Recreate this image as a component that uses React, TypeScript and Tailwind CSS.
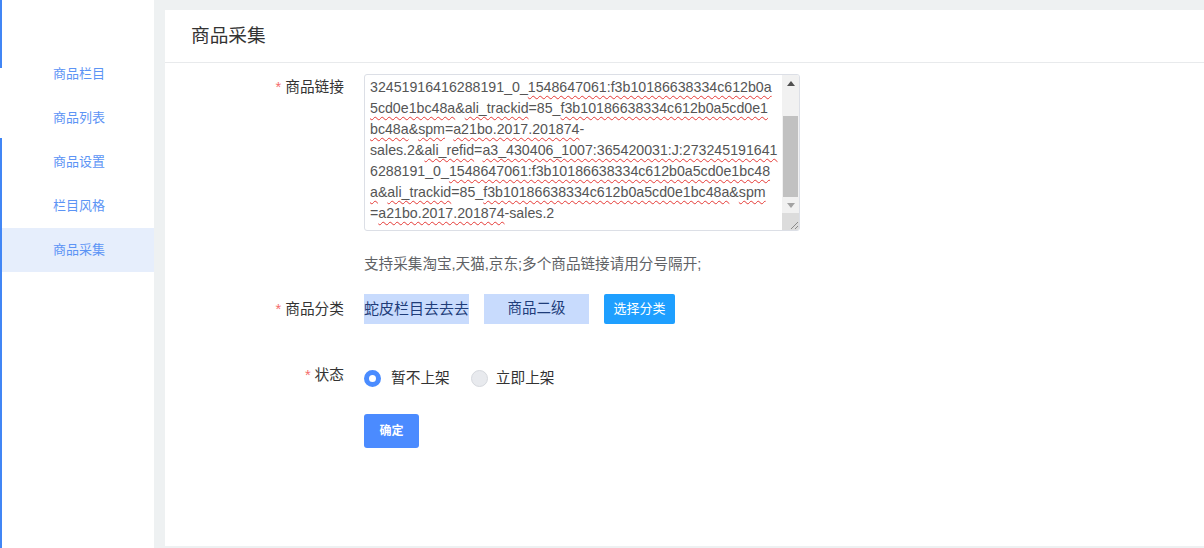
import React from "react"

const menu = ["商品栏目", "商品列表", "商品设置", "栏目风格", "商品采集"]

// [text, has spellcheck squiggle]
const linkLines: [string, boolean][][] = [
  [["32451916416288191_0_", false], ["1548647061:f3b10186638334c612b0a", true]],
  [["5cd0e1bc48a", true], ["&", false], ["ali_trackid", true], ["=85_", false], ["f3b10186638334c612b0a5cd0e1", true]],
  [["bc48a", true], ["&", false], ["spm", true], ["=", false], ["a21bo.2017.201874", true], ["-", false]],
  [["sales.2&", false], ["ali_refid", true], ["=", false], ["a3_430406_1007:365420031:J:273245191641", true]],
  [["6288191_0_", false], ["1548647061:f3b10186638334c612b0a5cd0e1bc48", true]],
  [["a", true], ["&", false], ["ali_trackid", true], ["=85_", false], ["f3b10186638334c612b0a5cd0e1bc48a", true], ["&", false], ["spm", true]],
  [["=", false], ["a21bo.2017.201874", true], ["-sales.2", false]],
]

function FormLabel({ text }: { text: string }) {
  return (
    <div className="w-[179px] shrink-0 text-right text-[14.7px] leading-[22px] text-[#333]">
      <span className="text-[#f56c6c] mr-[4px]">*</span>
      {text}
    </div>
  )
}

function LinkBox() {
  return (
    <div className="w-[436px] h-[157px] border border-[#dcdfe6] rounded-[3px] flex overflow-hidden bg-white">
      <div className="flex-1 pl-[5px] pt-[2px] text-[14.2px] leading-[21px] text-[#555] whitespace-nowrap overflow-hidden">
        {linkLines.map((line, i) => (
          <div key={i}>
            {line.map(([t, bad], j) =>
              bad ? (
                <span key={j} className="underline decoration-wavy decoration-[#e53935] decoration-1 underline-offset-[3px]">
                  {t}
                </span>
              ) : (
                <span key={j}>{t}</span>
              )
            )}
          </div>
        ))}
      </div>
      <div className="w-[17px] shrink-0 flex flex-col bg-[#f1f1f1]">
        <div className="h-[17px] flex items-center justify-center">
          <svg width="8" height="5" viewBox="0 0 8 5">
            <path d="M0 5 L4 0 L8 5 Z" fill="#505050" />
          </svg>
        </div>
        <div className="h-[24px]" />
        <div className="h-[81px] mx-[1px] bg-[#c1c1c1]" />
        <div className="h-[16px] flex items-center justify-center">
          <svg width="8" height="5" viewBox="0 0 8 5">
            <path d="M0 0 L4 5 L8 0 Z" fill="#a3a3a3" />
          </svg>
        </div>
        <div className="h-[17px] bg-[#dcdcdc] flex items-end justify-end">
          <svg width="10" height="10" viewBox="0 0 10 10">
            <path d="M9 2 L2 9 M9 6 L6 9" stroke="#8a8a8a" strokeWidth="1" />
          </svg>
        </div>
      </div>
    </div>
  )
}

export default function App() {
  return (
    <div className="w-full h-[548px] flex bg-[#eef1f2] font-['Liberation_Sans','Noto_Sans_CJK_SC',sans-serif]">
      {/* sidebar */}
      <div className="w-[154px] shrink-0 flex bg-white">
        <div className="w-[2px] flex flex-col">
          <div className="h-[68px] bg-[#4186f5]" />
          <div className="h-[70px]" />
          <div className="flex-1 bg-[#4186f5]" />
        </div>
        <div className="flex-1 pt-[52px] flex flex-col">
          {menu.map((item, i) => (
            <div
              key={item}
              className={`h-[44px] flex items-center pl-[51px] text-[13px] text-[#5c94f5] ${
                i === menu.length - 1 ? "bg-[#e6eefc]" : ""
              }`}
            >
              {item}
            </div>
          ))}
        </div>
      </div>

      {/* main */}
      <div className="flex-1 pl-[11px] pt-[10px] pb-[2px] flex">
        <div className="flex-1 bg-white flex flex-col">
          <div className="h-[53px] shrink-0 border-b border-[#e8eaec] px-[26px] flex items-center text-[18.7px] text-[#333]">
            商品采集
          </div>

          <div className="pt-[11px] flex flex-col">
            <div className="flex">
              <div className="pt-[2px]">
                <FormLabel text="商品链接" />
              </div>
              <div className="ml-[20px]">
                <LinkBox />
                <div className="mt-[22px] text-[14.6px] leading-[22px] text-[#606266]">
                  支持采集淘宝,天猫,京东;多个商品链接请用分号隔开;
                </div>
              </div>
            </div>

            <div className="flex items-center mt-[19px]">
              <FormLabel text="商品分类" />
              <div className="ml-[20px] flex items-center gap-[15px]">
                <div className="w-[105px] h-[30px] bg-[#c8dbfd] text-[#1f3d7a] text-[15px] flex items-center justify-center whitespace-nowrap">
                  蛇皮栏目去去去
                </div>
                <div className="w-[105px] h-[30px] bg-[#c8dbfd] text-[#1f3d7a] text-[14.5px] flex items-center justify-center">
                  商品二级
                </div>
                <button className="w-[71px] h-[30px] bg-[#1e9fff] text-white text-[13px] rounded-[2px]">
                  选择分类
                </button>
              </div>
            </div>

            <div className="flex items-center mt-[43px]">
              <div className="-mt-[6px]">
                <FormLabel text="状态" />
              </div>
              <div className="ml-[20px] flex items-center text-[14.7px] text-[#333]">
                <span className="w-[17px] h-[17px] rounded-full border-[5px] border-[#4a8cff] bg-white" />
                <span className="ml-[10px]">暂不上架</span>
                <span className="ml-[21px] w-[17px] h-[17px] rounded-full border border-[#d6d9de] bg-[#e8eaee]" />
                <span className="ml-[8px]">立即上架</span>
              </div>
            </div>

            <div className="ml-[199px] mt-[25px]">
              <button className="w-[55px] h-[34px] bg-[#4b8bff] text-white text-[12px] font-bold rounded-[3px]">
                确定
              </button>
            </div>
          </div>
        </div>
      </div>
    </div>
  )
}
